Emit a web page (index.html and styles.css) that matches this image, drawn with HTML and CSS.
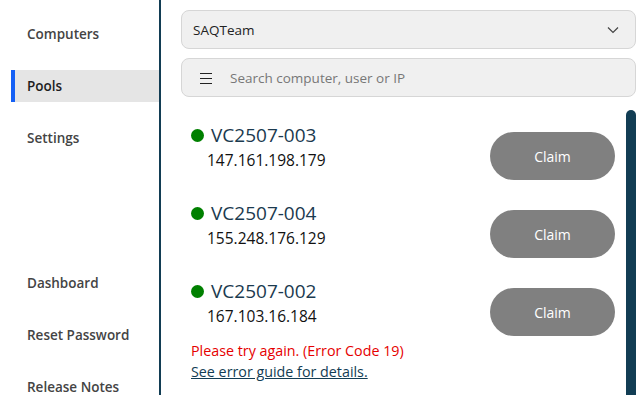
FILE: index.html
```html
<!DOCTYPE html>
<html lang="en">
<head>
    <meta charset="UTF-8">
    <meta name="viewport" content="width=device-width, initial-scale=1.0">
    <title>Pools</title>
    <link rel="stylesheet" href="styles.css">
</head>
<body>

    <!-- Side navigation -->
    <nav class="sidebar">
        <div class="nav-group">
            <a class="nav-item" href="#">Computers</a>
            <a class="nav-item active" href="#">Pools</a>
            <a class="nav-item" href="#">Settings</a>
        </div>
        <div class="nav-group bottom">
            <a class="nav-item" href="#">Dashboard</a>
            <a class="nav-item" href="#">Reset Password</a>
            <a class="nav-item" href="#">Release Notes</a>
        </div>
    </nav>

    <main class="content">
        <div class="pool-select">
            <span>SAQTeam</span>
            <svg class="chevron" width="12" height="8" viewBox="0 0 12 8">
                <path d="M1 1.5 L6 6.5 L11 1.5" fill="none" stroke="#444" stroke-width="1.2"/>
            </svg>
        </div>

        <div class="search-box">
            <svg class="menu-icon" width="12" height="12" viewBox="0 0 12 12">
                <path d="M0 1.5 H12 M0 6.5 H12 M0 11.5 H12" stroke="#222" stroke-width="1.2"/>
            </svg>
            <span class="placeholder">Search computer, user or IP</span>
        </div>

        <div class="list-area">
            <div class="computer-list">
                <div class="computer-row">
                    <div class="computer-info">
                        <div class="computer-name"><span class="status-dot"></span>VC2507-003</div>
                        <div class="computer-ip">147.161.198.179</div>
                    </div>
                    <button class="claim-btn">Claim</button>
                </div>

                <div class="computer-row">
                    <div class="computer-info">
                        <div class="computer-name"><span class="status-dot"></span>VC2507-004</div>
                        <div class="computer-ip">155.248.176.129</div>
                    </div>
                    <button class="claim-btn">Claim</button>
                </div>

                <div class="computer-row">
                    <div class="computer-info">
                        <div class="computer-name"><span class="status-dot"></span>VC2507-002</div>
                        <div class="computer-ip">167.103.16.184</div>
                        <div class="error-text">Please try again. (Error Code 19)</div>
                        <a class="error-link" href="#">See error guide for details.</a>
                    </div>
                    <button class="claim-btn">Claim</button>
                </div>
            </div>
            <div class="scroll-thumb"></div>
        </div>
    </main>

</body>
</html>
```

FILE: styles.css
```css
body {
    font-family: "Open Sans", "Noto Sans", sans-serif;
    background-color: #ffffff;
    margin: 0;
    height: 100vh;
    overflow: hidden;
    display: flex;
}

/* Sidebar */
.sidebar {
    width: 159px;
    flex-shrink: 0;
    border-right: 2px solid #123d54;
    padding-top: 18px;
    box-sizing: content-box;
}

.nav-group {
    display: flex;
    flex-direction: column;
    gap: 20px;
}

.nav-group.bottom {
    margin-top: 113px;
}

.nav-item {
    display: block;
    height: 32px;
    line-height: 32px;
    margin-left: 11px;
    padding-left: 12px;
    border-left: 4px solid transparent;
    font-size: 13.5px;
    font-weight: 600;
    color: #444444;
    text-decoration: none;
}

.nav-item.active {
    background-color: #e5e5e5;
    border-left-color: #1560f5;
    color: #1e1e1e;
}

/* Main panel */
.content {
    flex: 1;
    padding: 10px 6px 0 20px;
    display: flex;
    flex-direction: column;
    min-width: 0;
}

.pool-select, .search-box {
    height: 39px;
    box-sizing: border-box;
    border: 1px solid #d6d6d6;
    border-radius: 8px;
    background-color: #f0f0f0;
    display: flex;
    align-items: center;
    font-size: 13.5px;
}

.pool-select {
    justify-content: space-between;
    padding: 0 16px 0 11px;
    color: #222222;
}

.search-box {
    margin-top: 9px;
    padding-left: 18px;
    gap: 18px;
}

.placeholder {
    color: #777777;
}

/* Computer list */
.list-area {
    margin-top: 13px;
    flex: 1;
    display: flex;
}

.computer-list {
    flex: 1;
    padding: 13px 11px 0 10px;
    display: flex;
    flex-direction: column;
    gap: 21px;
}

.scroll-thumb {
    width: 10px;
    background-color: #123d54;
    border-radius: 5px 5px 0 0;
}

.computer-row {
    display: flex;
    justify-content: space-between;
    align-items: flex-start;
}

.computer-name {
    display: flex;
    align-items: center;
    font-size: 19px;
    line-height: 24px;
    color: #1b3a4f;
}

.status-dot {
    width: 13px;
    height: 13px;
    border-radius: 50%;
    background-color: #008000;
    margin: 0 7px 0 0;
}

.computer-ip {
    font-size: 15.5px;
    line-height: 26px;
    padding-left: 16px;
    color: #111111;
}

.error-text {
    margin-top: 12px;
    font-size: 14.3px;
    line-height: 19px;
    color: #e60000;
}

.error-link {
    font-size: 14.3px;
    line-height: 19px;
    color: #123d54;
}

.claim-btn {
    margin-top: 9px;
    width: 125px;
    height: 48px;
    border: none;
    border-radius: 24px;
    background-color: #808080;
    color: #ffffff;
    font-family: inherit;
    font-size: 14px;
    cursor: pointer;
}
```
